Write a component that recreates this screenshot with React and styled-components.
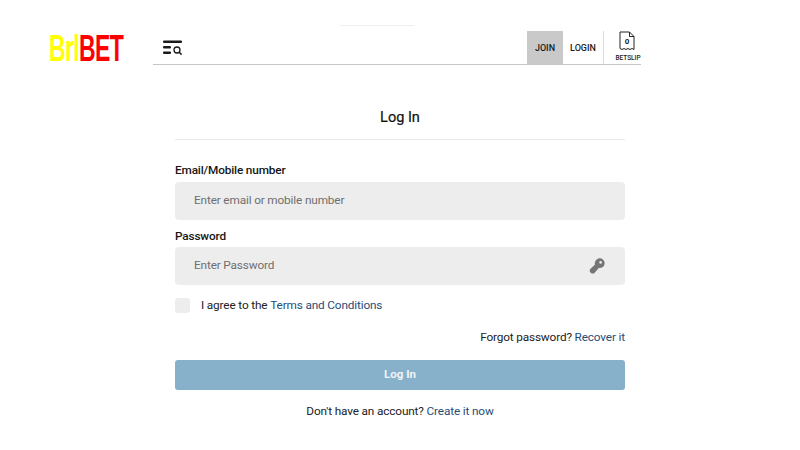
import React from "react";
import styled, { createGlobalStyle } from "styled-components";

const Global = createGlobalStyle`
  html, body { margin: 0; padding: 0; background: #fff; }
  body { font-family: Roboto, "Liberation Sans", sans-serif; color: #1a1a1a; width: 800px; height: 450px; overflow: hidden; }
  * { box-sizing: border-box; }
`;
const Page = styled.div`display: flex; flex-direction: column; width: 800px; height: 450px;`;
const TopRow = styled.header`display: flex; align-items: flex-start; height: 65px; padding-top: 25px;`;
const LogoBox = styled.div`width: 153px; padding: 6px 0 0 49px; height: 40px; overflow: visible;`;
const LogoText = styled.div`
  display: inline-block; font-family: "Liberation Sans", sans-serif; font-size: 36px; line-height: 36px; font-weight: 700;
  transform: scaleX(0.64); transform-origin: left center; white-space: nowrap; letter-spacing: -1px;
`;
const LogoPart = styled.span`color: ${p => p.$c};`;
const Nav = styled.nav`
  width: 488px; height: 40px; border-bottom: 1px solid #c6c6c6; display: flex; align-items: stretch; justify-content: space-between;
  position: relative; padding-top: 6px;
`;
const TopHairline = styled.div`position: absolute; top: 0; left: 187px; width: 74px; height: 1px; background: #efefef;`;
const MenuBtn = styled.div`display: flex; align-items: center; padding: 0 0 0 10px; height: 33px;`;
const Actions = styled.div`display: flex; align-items: stretch;`;
const AuthBtn = styled.div`
  width: ${p => p.$w}px; display: flex; align-items: center; justify-content: center; font-size: 9px; font-weight: 500;
  color: #1c1c1c; background: ${p => p.$bg || "transparent"}; border-right: ${p => p.$sep ? "1px solid #dcdcdc" : "none"};
`;
const Betslip = styled.div`width: 37px; padding-left: 11px; display: flex; flex-direction: column; align-items: center; font-size: 6.5px; font-weight: 500; color: #222; white-space: nowrap;`;
const SlipIcon = styled.div`position: relative; width: 16px; height: 20px; margin: 0 2px 3px 0;`;
const SlipCount = styled.span`position: absolute; top: 6px; left: 0; width: 16px; text-align: center; font-size: 8px; font-weight: 700; line-height: 9px;`;
const Main = styled.main`width: 450px; margin: 0 auto; display: flex; flex-direction: column;`;
const Title = styled.h1`
  margin: 0; padding: 44px 0 0; height: 75px; text-align: center; font-size: 14.5px; line-height: 17px; font-weight: 400; color: #111;
  border-bottom: 1px solid #e9e9e9; -webkit-text-stroke: 0.2px #111;
`;
const Label = styled.label`display: block; font-size: 11.8px; line-height: 14px; letter-spacing: -0.15px; font-weight: 500; color: #161616; margin-top: ${p => p.$mt}px; margin-bottom: ${p => p.$mb}px;`;
const Field = styled.div`
  height: 38px; background: #ededed; border-radius: 4px; display: flex; align-items: center; justify-content: space-between;
  padding: 0 20px 3px 19px; font-size: 11.8px; letter-spacing: -0.15px; color: #6f6f6f;
`;
const KeyIcon = styled.svg`margin-top: 3px;`;
const CheckRow = styled.div`display: flex; align-items: center; margin-top: 12px; font-size: 11.8px; letter-spacing: -0.15px; color: #222; height: 16px;`;
const Check = styled.span`width: 15px; height: 15px; border-radius: 3px; background: #ededed; margin-right: 11px;`;
const Link = styled.a`color: #1f4e79;`;
const Forgot = styled.div`text-align: right; font-size: 11.8px; letter-spacing: -0.15px; line-height: 14px; margin-top: 17px; color: #222;`;
const Submit = styled.button`
  display: block; width: 100%; height: 30px; margin-top: 16px; padding: 0 0 2px; border: 0; border-radius: 3px; background: #87b0ca; color: #eef4f8;
  font: 700 11.5px Roboto, sans-serif;
`;
const Footer = styled.div`text-align: center; font-size: 11.8px; letter-spacing: -0.15px; line-height: 14px; margin-top: 14px; color: #222;`;

export default function App() {
  return (
    <Page>
      <Global />
      <TopRow>
        <LogoBox>
          <LogoText><LogoPart $c="#ffff00">Brl</LogoPart><LogoPart $c="#ff0000">BET</LogoPart></LogoText>
        </LogoBox>
        <Nav>
          <TopHairline />
          <MenuBtn>
            <svg width="20" height="16" viewBox="0 0 20 16">
              <rect x="0" y="0.5" width="19" height="2.6" rx="1" fill="#1b1b1b" />
              <rect x="0" y="6" width="8" height="2.6" rx="1" fill="#1b1b1b" />
              <rect x="0" y="11.5" width="8" height="2.6" rx="1" fill="#1b1b1b" />
              <circle cx="14" cy="10" r="3" fill="none" stroke="#1b1b1b" strokeWidth="1.3" />
              <path d="M16.2 12.2L18.6 14.6" stroke="#1b1b1b" strokeWidth="1.5" />
            </svg>
          </MenuBtn>
          <Actions>
            <AuthBtn $w={36} $bg="#c9c9c9">JOIN</AuthBtn>
            <AuthBtn $w={41} $sep>LOGIN</AuthBtn>
            <Betslip>
              <SlipIcon>
                <svg width="16" height="20" viewBox="0 0 16 20">
                  <path d="M1 1H10.5L15 5.5V18.5L13 17.5L11 18.5L9 17.5L7 18.5L5 17.5L3 18.5L1 17.5Z" fill="none" stroke="#222" strokeWidth="1" />
                  <path d="M10.5 1V5.5H15" fill="none" stroke="#222" strokeWidth="1" />
                </svg>
                <SlipCount>0</SlipCount>
              </SlipIcon>
              BETSLIP
            </Betslip>
          </Actions>
        </Nav>
      </TopRow>
      <Main>
        <Title>Log In</Title>
        <Label $mt={23} $mb={5}>Email/Mobile number</Label>
        <Field>Enter email or mobile number</Field>
        <Label $mt={9} $mb={4}>Password</Label>
        <Field>
          Enter Password
          <KeyIcon width="16" height="16" viewBox="0 0 16 16">
            <path d="M2.6 15.4L0.8 13.8V11.4L6 6.4A4.9 4.9 0 1 1 9.8 10L5 15.4Z" fill="#757575" />
            <circle cx="11.6" cy="4.4" r="1.3" fill="#ededed" />
          </KeyIcon>
        </Field>
        <CheckRow><Check />I agree to the&nbsp;<Link>Terms and Conditions</Link></CheckRow>
        <Forgot>Forgot password? <Link>Recover it</Link></Forgot>
        <Submit>Log In</Submit>
        <Footer>Don't have an account? <Link>Create it now</Link></Footer>
      </Main>
    </Page>
  );
}
